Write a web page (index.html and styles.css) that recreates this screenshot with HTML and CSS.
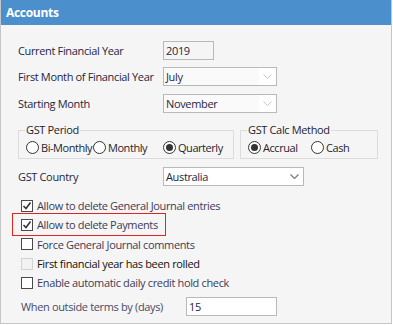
FILE: index.html
```html
<!DOCTYPE html>
<html lang="en">
<head>
    <meta charset="UTF-8">
    <meta name="viewport" content="width=device-width, initial-scale=1.0">
    <title>Accounts</title>
    <link rel="stylesheet" href="styles.css">
</head>
<body>
    <div class="window">
        <!-- Заголовок -->
        <div class="title">Accounts</div>

        <div class="content">
            <div class="row row-year">
                <span class="label">Current Financial Year</span>
                <div class="field field-year">2019</div>
            </div>
            <div class="row row-first">
                <span class="label">First Month of Financial Year</span>
                <div class="select select-month">
                    <span class="select-text">July</span>
                    <span class="select-arrow">
                        <svg width="9" height="5" viewBox="0 0 9 5"><polyline points="0.5,0.5 4.5,4.5 8.5,0.5" fill="none" stroke="#c8c8c8" stroke-width="1"/></svg>
                    </span>
                </div>
            </div>
            <div class="row row-start">
                <span class="label">Starting Month</span>
                <div class="select select-month">
                    <span class="select-text">November</span>
                    <span class="select-arrow">
                        <svg width="9" height="5" viewBox="0 0 9 5"><polyline points="0.5,0.5 4.5,4.5 8.5,0.5" fill="none" stroke="#c8c8c8" stroke-width="1"/></svg>
                    </span>
                </div>
            </div>

            <!-- Группы GST -->
            <div class="groups">
                <fieldset class="group group-period">
                    <legend>GST Period</legend>
                    <div class="radios">
                        <span class="radio radio-bi"><span class="dot"></span>Bi-Monthly</span>
                        <span class="radio radio-monthly"><span class="dot"></span>Monthly</span>
                        <span class="radio"><span class="dot checked"></span>Quarterly</span>
                    </div>
                </fieldset>
                <fieldset class="group group-calc">
                    <legend>GST Calc Method</legend>
                    <div class="radios">
                        <span class="radio radio-accrual"><span class="dot checked"></span>Accrual</span>
                        <span class="radio"><span class="dot"></span>Cash</span>
                    </div>
                </fieldset>
            </div>

            <div class="row row-country">
                <span class="label">GST Country</span>
                <div class="select select-country">
                    <span class="select-text">Australia</span>
                    <span class="select-arrow">
                        <svg width="9" height="5" viewBox="0 0 9 5"><polyline points="0.5,0.5 4.5,4.5 8.5,0.5" fill="none" stroke="#7a7a7a" stroke-width="1.2"/></svg>
                    </span>
                </div>
            </div>

            <!-- Флажки -->
            <div class="checks">
                <div class="check">
                    <span class="box"><svg width="10" height="10" viewBox="0 0 10 10"><polyline points="1.5,5 4,7.5 8.5,1.5" fill="none" stroke="#333" stroke-width="1.6"/></svg></span>
                    Allow to delete General Journal entries
                </div>
                <div class="check check-marked">
                    <span class="box"><svg width="10" height="10" viewBox="0 0 10 10"><polyline points="1.5,5 4,7.5 8.5,1.5" fill="none" stroke="#333" stroke-width="1.6"/></svg></span>
                    Allow to delete Payments
                </div>
                <div class="check">
                    <span class="box"></span>
                    Force General Journal comments
                </div>
                <div class="check check-disabled">
                    <span class="box"></span>
                    First financial year has been rolled
                </div>
                <div class="check">
                    <span class="box"></span>
                    Enable automatic daily credit hold check
                </div>
            </div>

            <div class="row row-terms">
                <span class="label label-terms">When outside terms by (days)</span>
                <div class="field field-terms">15</div>
            </div>
        </div>
    </div>
</body>
</html>
```

FILE: styles.css
```css
:root {
    --header-color: #4b8fcc;
    --background-color: #f5f5f5;
    --border-color: #b9b9b9;
    --group-border: #dcdcdc;
    --label-color: #262642;
    --check-color: #3c3c58;
}

body {
    margin: 0;
    padding: 0;
    background: #ffffff;
}

.window {
    width: 390px;
    height: 323px;
    border: 1px solid #c6c6c6;
    border-top: none;
    background: var(--background-color);
    font-family: 'Open Sans', sans-serif;
    font-size: 11px;
    letter-spacing: -0.35px;
    color: var(--label-color);
    white-space: nowrap;
}

.title {
    height: 25px;
    background: var(--header-color);
    color: white;
    font-weight: bold;
    font-size: 12px;
    letter-spacing: -0.3px;
    line-height: 25px;
    padding-left: 5px;
}

.content {
    padding: 16px 0 0 17px;
}

.row {
    display: flex;
    align-items: center;
    height: 19px;
}

.row-first {
    margin-top: 7px;
}

.row-start {
    margin-top: 8px;
}

.label {
    width: 145px;
    flex-shrink: 0;
}

.field {
    box-sizing: border-box;
    height: 19px;
    border: 1px solid var(--border-color);
    padding-left: 2px;
    line-height: 17px;
}

.field-year {
    width: 51px;
    background: var(--background-color);
}

.select {
    box-sizing: border-box;
    display: flex;
    height: 19px;
    border: 1px solid var(--border-color);
    background: #fafafa;
}

.select-month {
    width: 114px;
}

.select-country {
    width: 141px;
    background: white;
}

.select-text {
    flex: 1;
    padding-left: 2px;
    line-height: 17px;
}

.select-arrow {
    width: 17px;
    background: white;
    display: flex;
    align-items: center;
    justify-content: center;
}

/* Группы */
.groups {
    display: flex;
    gap: 6px;
    margin-top: 10px;
}

.group {
    margin: 0;
    padding: 3px 6px 4px 7px;
    border: 1px solid var(--group-border);
    min-width: 0;
}

.group-period {
    width: 201px;
}

.group-calc {
    width: 123px;
}

.group legend {
    padding: 0 1px;
    margin-left: -1px;
    line-height: 14px;
    color: #1e1e2e;
}

.radios {
    display: flex;
    height: 14px;
    align-items: center;
    color: #1e1e2e;
    letter-spacing: -0.45px;
}

.radio {
    display: flex;
    align-items: center;
    gap: 2px;
}

.radio-bi {
    width: 67px;
}

.radio-monthly {
    width: 70px;
}

.radio-accrual {
    width: 63px;
}

.dot {
    box-sizing: border-box;
    flex-shrink: 0;
    width: 13px;
    height: 13px;
    border: 1px solid #333;
    border-radius: 50%;
    background: white;
    display: flex;
    align-items: center;
    justify-content: center;
}

.dot.checked::after {
    content: '';
    width: 7px;
    height: 7px;
    border-radius: 50%;
    background: #333;
}

.row-country {
    margin-top: 8px;
}

/* Флажки */
.checks {
    margin-top: 10px;
    padding-left: 3px;
}

.check {
    display: flex;
    align-items: center;
    gap: 4px;
    height: 19.3px;
    color: var(--check-color);
    position: relative;
    width: fit-content;
}

.box {
    box-sizing: border-box;
    width: 12px;
    height: 12px;
    border: 1px solid #4a4a4a;
    background: white;
    display: flex;
    align-items: center;
    justify-content: center;
}

.check-marked::after {
    content: '';
    position: absolute;
    left: -9px;
    right: -8px;
    top: -2px;
    bottom: -1px;
    border: 1px solid #e02424;
}

.check-disabled {
    color: #111;
}

.check-disabled .box {
    border-color: #d2d2d2;
    background: #f2f2f2;
}

.row-terms {
    margin-top: 5px;
    padding-left: 3px;
}

.label-terms {
    width: 165px;
    color: #4a4a66;
}

.field-terms {
    width: 91px;
    background: white;
}
```
